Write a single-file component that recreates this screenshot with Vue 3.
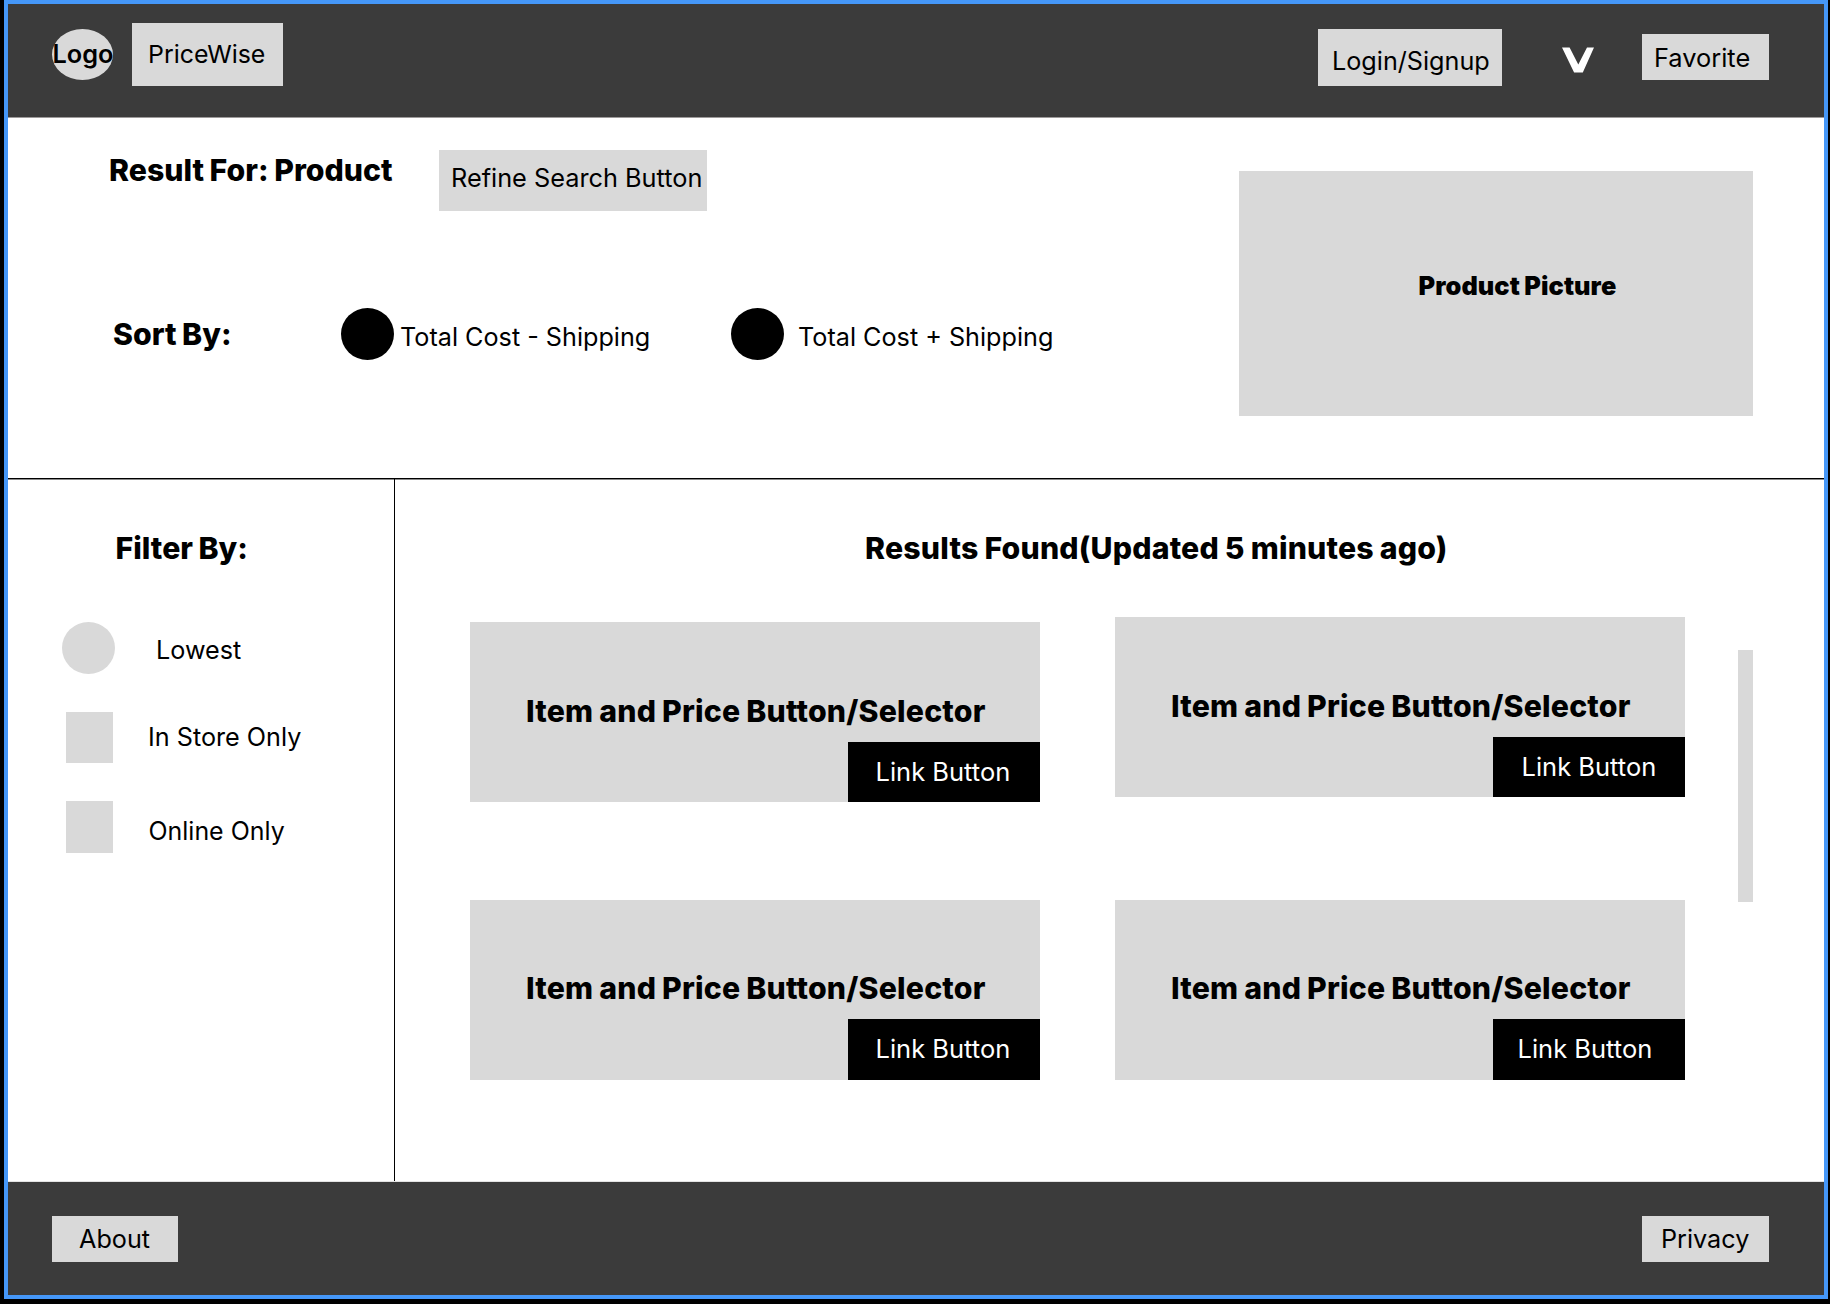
<script setup>
const filters = [
  { label: 'Lowest', kind: 'round' },
  { label: 'In Store Only', kind: 'store' },
  { label: 'Online Only', kind: 'online' },
]

const results = [
  { id: 1, kind: 'low' },
  { id: 2, kind: 'high' },
  { id: 3, kind: 'plain' },
  { id: 4, kind: 'plain shifted' },
]
</script>

<template>
  <div class="page">
    <div class="frame">
      <header class="header">
        <div class="logo"><span>Logo</span></div>
        <div class="chip brand">PriceWise</div>
        <div class="chip login">Login/Signup</div>
        <svg class="caret" width="32" height="26" viewBox="0 0 32 26">
          <path d="M0 .4H7.6L16.3 17.4L25 .4H32L20.8 25.4H12.1Z" fill="#fff" />
        </svg>
        <div class="chip favorite">Favorite</div>
      </header>

      <section class="summary">
        <div class="controls">
          <div class="query">
            <h1 class="title">Result For: Product</h1>
            <div class="chip refine">Refine Search Button</div>
          </div>
          <div class="sort">
            <h2 class="title">Sort By:</h2>
            <i class="radio"></i>
            <span class="minus">Total Cost - Shipping</span>
            <i class="radio"></i>
            <span class="plus">Total Cost + Shipping</span>
          </div>
        </div>
        <div class="picture">Product Picture</div>
      </section>

      <main class="body">
        <aside class="filters">
          <h2 class="title">Filter By:</h2>
          <div v-for="f in filters" :key="f.label" class="filter" :class="f.kind">
            <i class="mark"></i>
            <span>{{ f.label }}</span>
          </div>
        </aside>
        <section class="results">
          <h2 class="title">Results Found(Updated 5 minutes ago)</h2>
          <div class="listing">
            <div class="grid">
              <article v-for="r in results" :key="r.id" class="card" :class="r.kind">
                <h3 class="title">Item and Price Button/Selector</h3>
                <div class="link">Link Button</div>
              </article>
            </div>
            <div class="scrollbar"></div>
          </div>
        </section>
      </main>

      <footer class="footer">
        <div class="chip about">About</div>
        <div class="chip privacy">Privacy</div>
      </footer>
    </div>
  </div>
</template>

<style>
body {
  background: #000;
}
</style>

<style scoped>
.page {
  box-sizing: border-box;
  width: 1830px;
  height: 1304px;
  padding-left: 4px;
  overflow: hidden;
  background: #000;
  font: 400 25.2px/30px Inter, sans-serif;
  color: #000;
  white-space: nowrap;
}
.frame {
  box-sizing: border-box;
  width: 1824px;
  height: 1299px;
  border: 4px solid #4597f8;
  background: #fff;
  display: flex;
  flex-direction: column;
}
.header,
.footer {
  display: flex;
  align-items: flex-start;
  background: #3b3b3b;
  flex: none;
}
.header {
  height: 113px;
  border-bottom: 1px solid #9d9a9a;
}
.chip {
  box-sizing: border-box;
  background: #d9d9d9;
}
.logo {
  width: 61px;
  height: 51px;
  margin: 25px 0 0 44px;
  border-radius: 50%;
  background: #d9d9d9;
  font-size: 25.3px;
  font-weight: 600;
  line-height: 31px;
  display: flex;
  justify-content: center;
  padding: 9px 0 0 1px;
  box-sizing: border-box;
}
.brand {
  width: 151px;
  height: 63px;
  margin: 19px 0 0 19px;
  padding: 16px 0 0 16px;
  font-size: 24.9px;
}
.login {
  width: 184px;
  height: 57px;
  margin: 25px 0 0 1035px;
  padding: 17px 0 0 14px;
}
.caret {
  margin: 43px 0 0 60px;
}
.favorite {
  width: 127px;
  height: 46px;
  margin: 30px 0 0 48px;
  padding: 9px 0 0 12px;
  font-size: 25.4px;
}
.title {
  margin: 0;
  font-size: 30.24px;
  font-weight: 800;
  line-height: 36px;
  letter-spacing: 0.03px;
  word-spacing: -1.2px;
}
.summary {
  height: 360px;
  flex: none;
  display: flex;
  justify-content: space-between;
  align-items: flex-start;
}
.query {
  display: flex;
  padding: 32px 0 0 101px;
}
.query .title {
  margin-top: 2px;
  width: 330px;
}
.refine {
  width: 268px;
  height: 61px;
  padding: 13px 0 0 12px;
  font-size: 25.3px;
}
.sort {
  display: flex;
  padding: 97px 0 0 105px;
}
.sort .title {
  margin-top: 8px;
  width: 228px;
}
.radio {
  width: 53px;
  height: 52px;
  border-radius: 50%;
  background: #000;
}
.sort span {
  margin-top: 14px;
}
.minus {
  margin-left: 6px;
  width: 331px;
}
.plus {
  margin-left: 14px;
}
.picture {
  width: 514px;
  height: 245px;
  margin: 53px 71px 0 0;
  box-sizing: border-box;
  padding: 100px 0 0 179.5px;
  background: #d9d9d9;
  font-size: 25.3px;
  font-weight: 900;
  letter-spacing: 0.1px;
  word-spacing: -0.8px;
}
.body {
  flex: 1;
  display: flex;
  border-top: 1px solid #000;
  box-shadow: inset 0 1px #8a8a8a;
}
.filters {
  width: 386px;
  border-right: 1px solid #000;
  flex: none;
}
.filters .title {
  margin: 51px 0 0 107.5px;
}
.filter {
  display: flex;
  align-items: flex-start;
  height: 52px;
}
.mark {
  width: 47px;
  height: 52px;
  margin-left: 58px;
  background: #d9d9d9;
}
.round {
  margin-top: 56px;
}
.round .mark {
  width: 53px;
  margin-left: 54px;
  border-radius: 50%;
}
.round span {
  margin: 13px 0 0 41px;
}
.store {
  margin-top: 37px;
}
.store .mark {
  height: 51px;
  margin-top: 1px;
}
.store span {
  margin: 11px 0 0 35px;
}
.online {
  margin-top: 38px;
}
.online span {
  margin: 15px 0 0 35.5px;
  font-size: 24.95px;
}
.results {
  flex: 1;
}
.results > .title {
  margin: 51px 0 0 470px;
  letter-spacing: 0.2px;
  word-spacing: -0.9px;
}
.listing {
  display: flex;
  align-items: flex-start;
}
.grid {
  display: grid;
  grid-template-columns: 570px 570px;
  column-gap: 75px;
  row-gap: 98px;
  margin: 56px 0 0 75px;
}
.card {
  height: 180px;
  background: #d9d9d9;
  display: flex;
  flex-direction: column;
}
.card .title {
  margin: 71px 0 0 56px;
  letter-spacing: 0.2px;
  word-spacing: -0.9px;
}
.link {
  box-sizing: border-box;
  width: 192px;
  height: 60px;
  margin-top: 13px;
  align-self: flex-end;
  padding: 15px 0 0 27.5px;
  background: #000;
  color: #fff;
  font-size: 25.5px;
}
.high {
  margin: -5px 0 5px;
}
.high .link {
  padding-left: 28.5px;
}
.plain .title {
  margin-top: 70px;
}
.plain .link {
  height: 61px;
}
.shifted .link {
  padding-left: 24.5px;
}
.scrollbar {
  width: 15px;
  height: 252px;
  margin: 84px 0 0 53px;
  background: #d9d9d9;
}
.footer {
  height: 113px;
  border-top: 1px solid #e3e3e3;
  justify-content: space-between;
}
.about,
.privacy {
  height: 46px;
  margin-top: 34px;
  padding-top: 8px;
}
.about {
  width: 126px;
  margin-left: 44px;
  padding-left: 27px;
}
.privacy {
  width: 127px;
  margin-right: 55px;
  padding-left: 19px;
}
</style>
